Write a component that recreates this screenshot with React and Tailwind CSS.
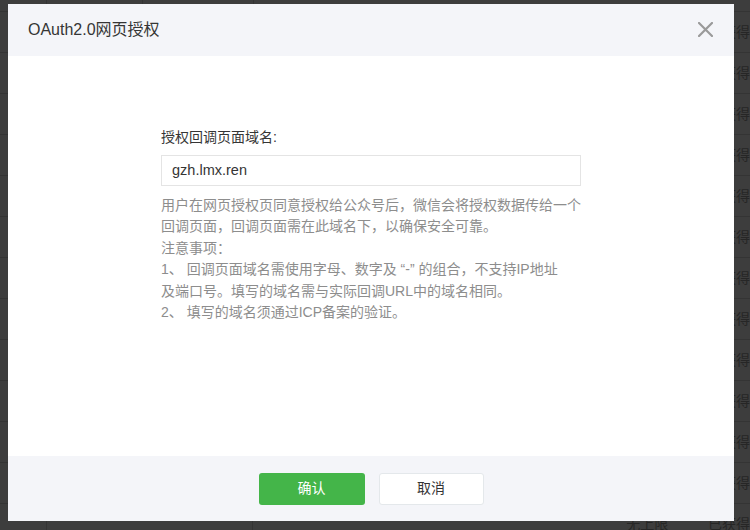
const rows = Array.from({ length: 13 })

function BackgroundTable() {
  return (
    <div className="flex flex-col">
      {/* header strip */}
      <div className="flex h-[12px] border-b border-[#343434]">
        <div className="w-[47px] border-r border-[#343434]" />
        <div className="w-[96px] border-r border-[#343434]" />
        <div className="w-[111px] border-r border-[#343434]" />
      </div>
      {rows.map((_, i) => (
        <div key={i} className="flex h-[41px] shrink-0 items-center border-b border-[#343434] text-[14px] text-[#262626]">
          <div className="h-full w-[47px] border-r border-[#343434]" />
          <div className="h-full w-[207px] border-r border-[#343434]" />
          <div className="w-[374px]" />
          <div className="w-[82px]">无上限</div>
          <div className="whitespace-nowrap">已获得</div>
        </div>
      ))}
    </div>
  )
}

export default function App() {
  return (
    <div className="relative h-[530px] w-[750px] overflow-hidden bg-[#3d3d3d] font-['Liberation_Sans','Noto_Sans_CJK_SC',sans-serif]">
      <BackgroundTable />

      {/* Dialog */}
      <div className="absolute left-[8px] top-[4px] flex h-[517px] w-[726px] flex-col bg-white">
        <div className="flex h-[52px] shrink-0 items-center justify-between bg-[#f4f5f9] pl-[20px] pr-[21px]">
          <h3 className="text-[16px] text-[#353535]">OAuth2.0网页授权</h3>
          <svg width="15" height="15" viewBox="0 0 15 15" className="mt-[-1px]">
            <path d="M1 1L14 14M14 1L1 14" stroke="#9a9a9a" strokeWidth="2.2" strokeLinecap="square" />
          </svg>
        </div>

        <div className="flex flex-1 justify-center pt-[71px]">
          <div className="w-[420px]">
            <label className="block text-[14px] leading-[20px] text-[#353535]">授权回调页面域名:</label>
            <div className="mt-[8px] flex h-[31px] items-center border border-[#e4e4e4] px-[10px] text-[14.5px] text-[#353535]">
              gzh.lmx.ren
            </div>
            <div className="mt-[9px] whitespace-nowrap text-[14px] leading-[21.4px] text-[#8d8d8d]">
              <p>用户在网页授权页同意授权给公众号后，微信会将授权数据传给一个</p>
              <p>回调页面，回调页面需在此域名下，以确保安全可靠。</p>
              <p>注意事项：</p>
              <p>1、 回调页面域名需使用字母、数字及 “-” 的组合，不支持IP地址</p>
              <p>及端口号。填写的域名需与实际回调URL中的域名相同。</p>
              <p>2、 填写的域名须通过ICP备案的验证。</p>
            </div>
          </div>
        </div>

        <div className="flex h-[65px] shrink-0 items-center justify-center gap-[14px] bg-[#f4f5f9]">
          <button className="h-[32px] w-[106px] rounded-[3px] bg-[#44b549] text-[14px] text-white">确认</button>
          <button className="h-[32px] w-[105px] rounded-[3px] border border-[#e4e8eb] bg-white text-[14px] text-[#353535]">取消</button>
        </div>
      </div>
    </div>
  )
}
